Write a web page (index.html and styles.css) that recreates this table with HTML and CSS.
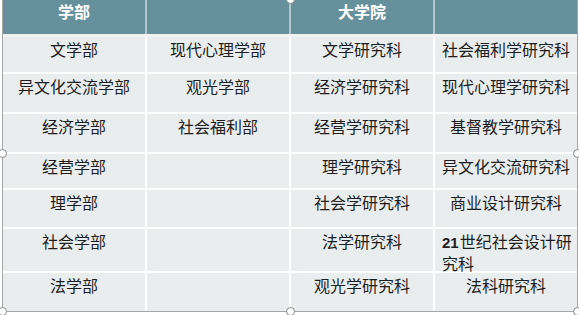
FILE: index.html
```html
<!DOCTYPE html>
<html lang="zh">
<head>
<meta charset="utf-8">
<link rel="stylesheet" href="styles.css">
</head>
<body>
<div class="frame">
  <div class="head">
    <div class="hcell">学部</div><div class="hcell"></div><div class="hcell">大学院</div><div class="hcell"></div>
  </div>
  <div class="body">
    <div class="cell">文学部</div><div class="cell">现代心理学部</div><div class="cell">文学研究科</div><div class="cell">社会福利学研究科</div>
    <div class="cell">异文化交流学部</div><div class="cell">观光学部</div><div class="cell">经济学研究科</div><div class="cell">现代心理学研究科</div>
    <div class="cell">经济学部</div><div class="cell">社会福利部</div><div class="cell">经营学研究科</div><div class="cell">基督教学研究科</div>
    <div class="cell">经营学部</div><div class="cell"></div><div class="cell">理学研究科</div><div class="cell">异文化交流研究科</div>
    <div class="cell">理学部</div><div class="cell"></div><div class="cell">社会学研究科</div><div class="cell">商业设计研究科</div>
    <div class="cell">社会学部</div><div class="cell"></div><div class="cell">法学研究科</div><div class="cell left"><span class="num">21</span>世纪社会设计研究科</div>
    <div class="cell">法学部</div><div class="cell"></div><div class="cell">观光学研究科</div><div class="cell">法科研究科</div>
  </div>
  <span class="handle h-tm"></span>
  <span class="handle h-ml"></span>
  <span class="handle h-mr"></span>
  <span class="handle h-bl"></span>
  <span class="handle h-bm"></span>
  <span class="handle h-br"></span>
</div>
</body>
</html>
```
FILE: styles.css
```css
html, body {
  margin: 0;
  padding: 0;
  background: #ffffff;
}
body {
  font-family: "Noto Sans CJK SC", "Noto Sans", sans-serif;
  width: 579px;
  height: 315px;
  overflow: hidden;
}
.frame {
  position: relative;
  margin-left: 2px;
  width: 574px;
  border-left: 1px solid #a6a6a6;
  border-right: 1px solid #a6a6a6;
  border-bottom: 1px solid #a6a6a6;
}
.head {
  display: grid;
  grid-template-columns: 142px 142px 142px 142px;
  column-gap: 2px;
  background: #b4c7cd;
  border-bottom: 3px solid #f2f4f4;
}
.hcell {
  background: #67909d;
  color: #ffffff;
  font-weight: bold;
  font-size: 16px;
  line-height: 21px;
  height: 34px;
  padding-top: 1px;
  box-sizing: border-box;
  text-align: center;
}
.body {
  display: grid;
  grid-template-columns: 142px 142px 142px 142px;
  grid-template-rows: 35px 38px 38px 34px 37px 42px 38px;
  gap: 2px;
  background: #ffffff;
}
.cell {
  background: #e9edee;
  color: #1e1e1e;
  font-size: 16px;
  line-height: 21px;
  padding: 2px 4px 0;
  text-align: center;
}
.cell.left {
  text-align: left;
  padding: 2px 0 0 7px;
}
.num {
  font-family: "Liberation Sans", sans-serif;
  font-weight: bold;
  font-size: 15px;
  margin-right: 1px;
}
.handle {
  position: absolute;
  width: 7px;
  height: 7px;
  border: 1px solid #8a8a8a;
  border-radius: 50%;
  background: #ffffff;
}
.h-tm { left: 283px; top: -5px; }
.h-ml { left: -5px; top: 149px; }
.h-mr { right: -5px; top: 149px; }
.h-bl { left: -5px; bottom: -5px; }
.h-bm { left: 283px; bottom: -5px; }
.h-br { right: -5px; bottom: -5px; }
```
